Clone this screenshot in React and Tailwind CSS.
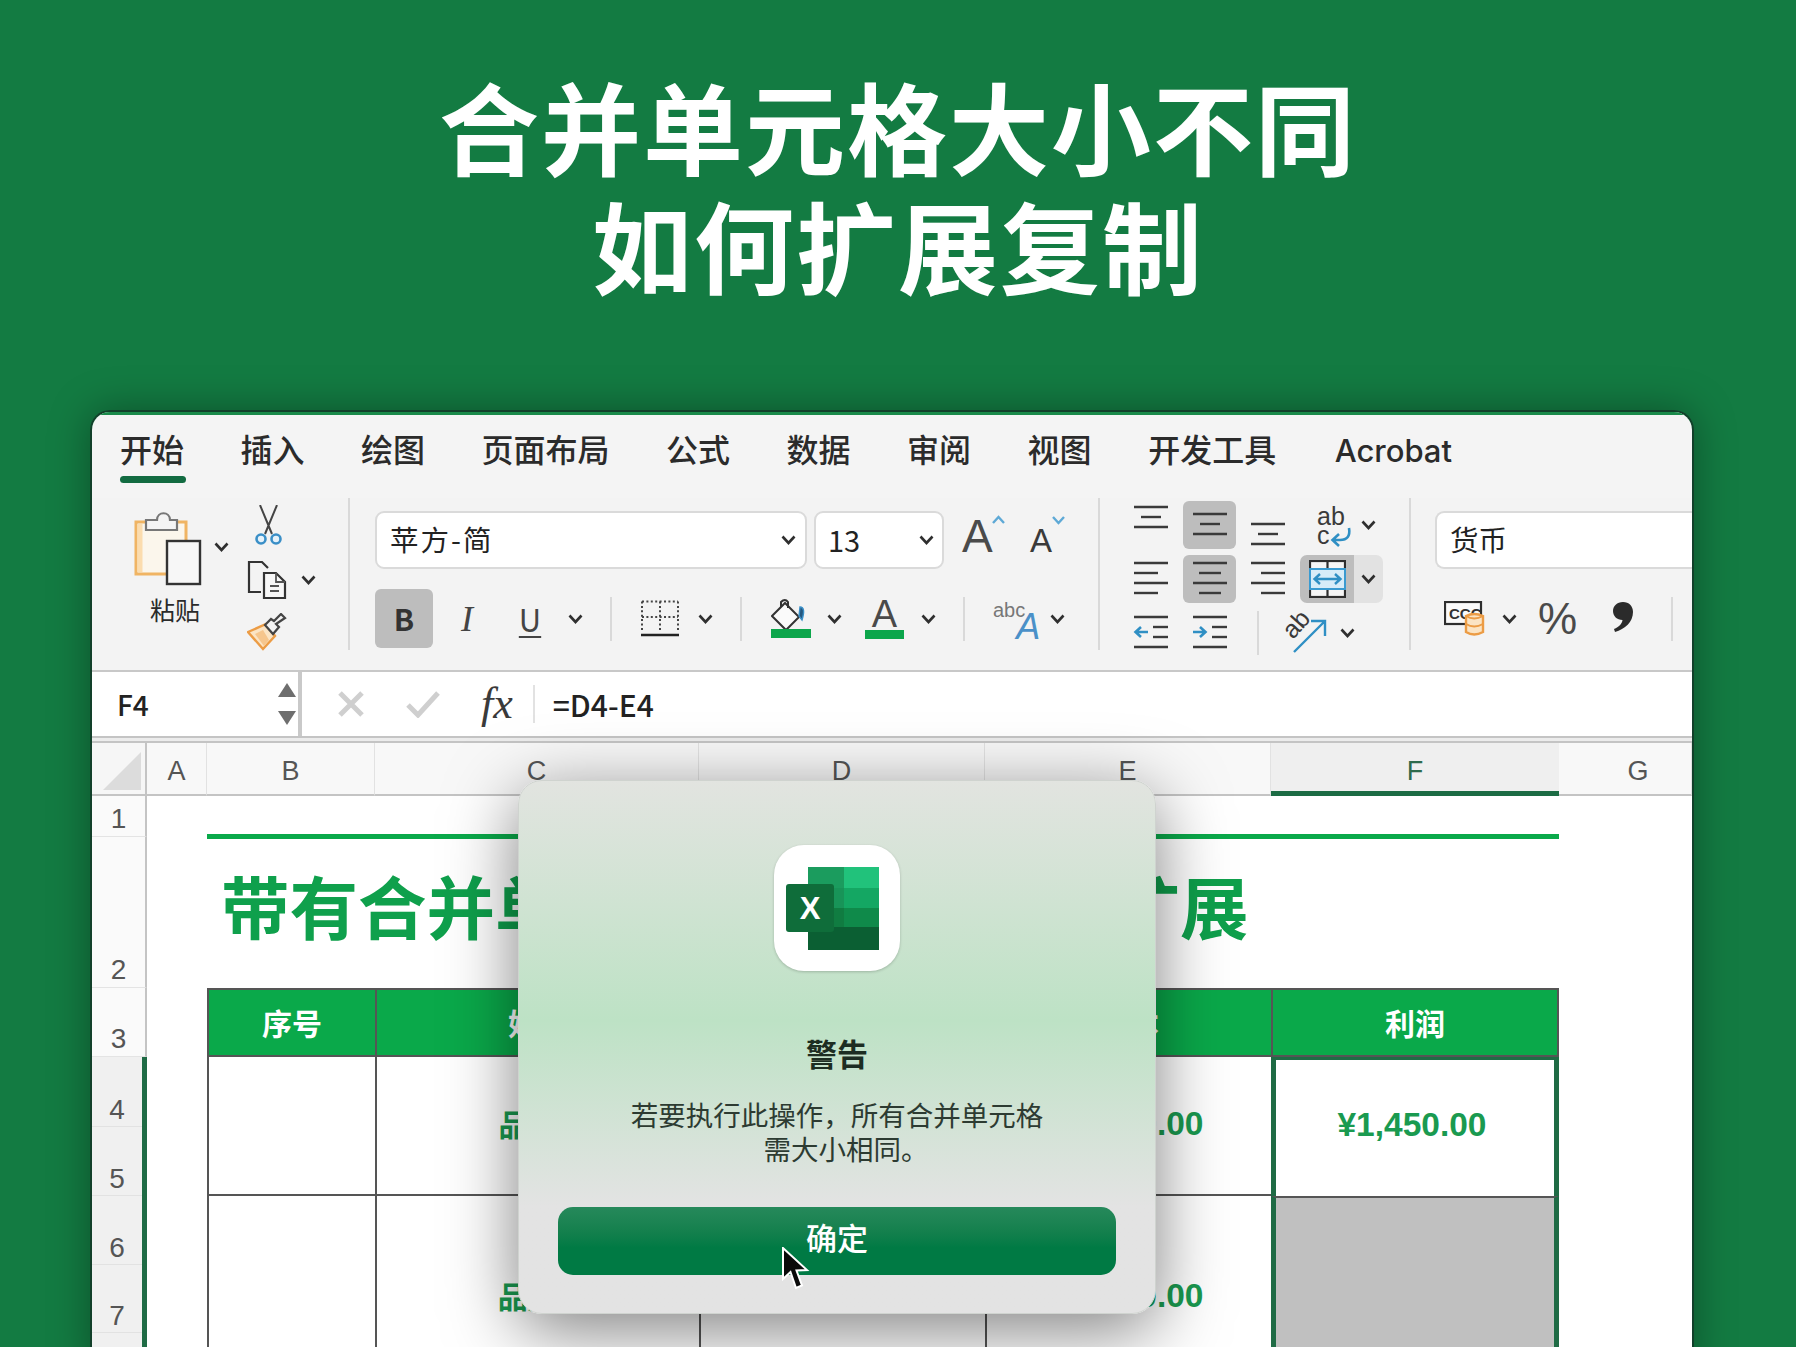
const tabs = ["开始", "插入", "绘图", "页面布局", "公式", "数据", "审阅", "视图", "开发工具", "Acrobat"];

const columns = [
  { label: "A", cls: "w-[60px]" },
  { label: "B", cls: "w-[168px]" },
  { label: "C", cls: "w-[324px]" },
  { label: "D", cls: "w-[286px]" },
  { label: "E", cls: "w-[286px]" },
  { label: "F", cls: "w-[288px]", active: true },
  { label: "G", cls: "w-[133px] pl-[26px]" },
];

// row number, row placement, selected
const rows = [
  ["1", "row-start-2", false],
  ["2", "row-start-3", false],
  ["3", "row-start-4", false],
  ["4", "row-start-5", true],
  ["5", "row-start-6", true],
  ["6", "row-start-7", true],
  ["7", "row-start-8", true],
  ["", "row-start-9", true],
];

const headers = [
  ["序号", "col-start-3"],
  ["姓名", "col-start-4"],
  ["销售额", "col-start-5"],
  ["成本", "col-start-6"],
];

function Chevron({ className = "" }) {
  return (
    <svg width="15" height="10" viewBox="0 0 15 10" className={className}>
      <path d="M1.5 1.5 L7.5 8 L13.5 1.5" fill="none" stroke="#2f2f2f" strokeWidth="2.6" />
    </svg>
  );
}

function ChevronBox({ w }) {
  return (
    <div className={`flex justify-center ${w}`}>
      <Chevron />
    </div>
  );
}

function Sep({ h = "h-[44px]", className = "" }) {
  return <div className={`w-[2px] shrink-0 bg-[#d9d9d9] ${h} ${className}`} />;
}

// horizontal text-alignment glyph, lines are [x1, x2, y]
function Lines({ lines, arrow }) {
  return (
    <svg width="36" height="48" viewBox="0 0 36 48">
      {lines.map(([a, b, y], i) => (
        <line key={i} x1={a} x2={b} y1={y} y2={y} stroke="#3a3a3a" strokeWidth="2.4" />
      ))}
      {arrow === "left" && (
        <path d="M15 23 H3 M8 18 L2.5 23 L8 28" fill="none" stroke="#2f8fc4" strokeWidth="2.6" />
      )}
      {arrow === "right" && (
        <path d="M1 23 H13 M8 18 L13.5 23 L8 28" fill="none" stroke="#2f8fc4" strokeWidth="2.6" />
      )}
    </svg>
  );
}

function PasteIcon() {
  return (
    <svg width="68" height="74" viewBox="0 0 68 74">
      <path d="M2 10 H52 V62 H2 Z" fill="#fbf6ec" stroke="#f0b463" strokeWidth="3" />
      <path d="M6 12 V60" stroke="#fbdcae" strokeWidth="5" />
      <path d="M12 18 V8 H23 C23 -1 36 -1 36 8 H43 V18 Z" fill="#f4f4f4" stroke="#777" strokeWidth="2.2" />
      <rect x="33" y="29" width="33" height="43" fill="#f7f7f7" stroke="#333" strokeWidth="2.4" />
    </svg>
  );
}

function ScissorsIcon() {
  return (
    <svg width="27" height="42" viewBox="0 0 27 42">
      <path d="M5 0 L17 29 M22 0 L10 29" stroke="#444" strokeWidth="2" fill="none" />
      <circle cx="6" cy="34" r="4.5" fill="#e6f2fa" stroke="#3a8fc7" strokeWidth="2.6" />
      <circle cx="21" cy="34" r="4.5" fill="#e6f2fa" stroke="#3a8fc7" strokeWidth="2.6" />
    </svg>
  );
}

function CopyIcon() {
  return (
    <svg width="40" height="40" viewBox="0 0 40 40">
      <path d="M14 32 H2 V2 H15 L21 8" fill="none" stroke="#333" strokeWidth="2.2" />
      <path d="M17 13 H29 L38 22 V38 H17 Z" fill="#f7f7f7" stroke="#333" strokeWidth="2.2" />
      <path d="M29 13 V22 H38 M23 26 H32 M23 31 H32" fill="none" stroke="#555" strokeWidth="1.8" />
    </svg>
  );
}

function BrushIcon() {
  return (
    <svg width="40" height="38" viewBox="0 0 40 38">
      <path d="M1 19 L19 11 L28 23 L16 36 Z" fill="#fbe4c4" stroke="#ec9c45" strokeWidth="2.4" />
      <path d="M8 21 L17 33 L22 27 L16 17 Z" fill="#f6c68d" />
      <path d="M18 12 L26 21 L32 14 L29 11 L38 5 L34 1 L27 8 L24 6 Z" fill="#f3f3f3" stroke="#444" strokeWidth="2.2" />
    </svg>
  );
}

function BorderIcon() {
  return (
    <svg width="38" height="37" viewBox="0 0 38 37">
      <path
        d="M1 1.5 H37 M1 1.5 V32 M37 1.5 V32 M19 1.5 V32 M1 17 H37"
        fill="none"
        stroke="#444"
        strokeWidth="2"
        strokeDasharray="2 2.4"
      />
      <path d="M0 35 H38" stroke="#222" strokeWidth="2.6" />
    </svg>
  );
}

function BucketIcon() {
  return (
    <svg width="40" height="40" viewBox="0 0 40 40">
      <path d="M1 17 L14 4 L28 18 L15 31 Z" fill="#fafafa" stroke="#333" strokeWidth="2" />
      <path d="M10 8 V3 Q14 -1 17 3 V9" fill="none" stroke="#333" strokeWidth="2" />
      <path d="M29 8 Q35 8 31 21 L28 17 Z" fill="#24577f" stroke="#3a8fc7" strokeWidth="1.4" />
      <rect x="0" y="30" width="40" height="9" fill="#0ca64b" />
    </svg>
  );
}

function MergeIcon() {
  return (
    <svg width="37" height="38" viewBox="0 0 37 38">
      <rect x="1" y="1" width="35" height="36" fill="#f5f5f5" stroke="#2e2e2e" strokeWidth="2.2" />
      <path d="M18.5 1 V11 M18.5 27 V37" stroke="#2e2e2e" strokeWidth="2.2" />
      <rect x="1" y="9" width="35" height="20" fill="#d7ecf8" stroke="#3a9ad0" strokeWidth="2" />
      <path d="M6 19 H31 M11 14 L5.5 19 L11 24 M26 14 L31.5 19 L26 24" fill="none" stroke="#2f8fc4" strokeWidth="2.4" />
    </svg>
  );
}

function WrapIcon() {
  return (
    <svg width="38" height="48" viewBox="0 0 38 48">
      <text x="1" y="24" fontSize="25" fill="#3a3a3a" fontFamily="Liberation Sans, sans-serif">ab</text>
      <text x="1" y="43" fontSize="25" fill="#3a3a3a" fontFamily="Liberation Sans, sans-serif">c</text>
      <path d="M33 27 Q35 39 24 39 H17 M23 33 L16.5 39 L23 45" fill="none" stroke="#2f8fc4" strokeWidth="2.6" />
    </svg>
  );
}

function RotateIcon() {
  return (
    <svg width="42" height="46" viewBox="0 0 42 46">
      <text
        x="8"
        y="30"
        fontSize="25"
        fill="#3a3a3a"
        fontFamily="Liberation Sans, sans-serif"
        transform="rotate(-48 8 30)"
      >
        ab
      </text>
      <path d="M9 42 L39 12 M26 11 H40 V26" fill="none" stroke="#2f8fc4" strokeWidth="2.4" />
    </svg>
  );
}

function CurrencyIcon() {
  return (
    <svg width="42" height="36" viewBox="0 0 42 36">
      <rect x="1" y="1" width="36" height="22" fill="#fafafa" stroke="#2e2e2e" strokeWidth="2.2" />
      <text x="5" y="18" fontSize="15" fontWeight="700" fill="#333" fontFamily="Liberation Sans, sans-serif">CCC</text>
      <path d="M22 15 Q30 11 39 15 V31 Q30 36 22 31 Z" fill="#fbe4c4" stroke="#ec9c45" strokeWidth="2.4" />
      <path d="M22 15 Q30 20 39 15 M22 23 Q30 28 39 23" fill="none" stroke="#ec9c45" strokeWidth="2" />
    </svg>
  );
}

function CommaIcon() {
  return (
    <svg width="20" height="30" viewBox="0 0 20 30">
      <path d="M10 0 C16 0 20 4 20 10 C20 20 12 27 2 30 L1 27 C6 25 9 22 9.5 18 C4 18 0 14 0 9 C0 4 4 0 10 0 Z" fill="#2b2b2b" />
    </svg>
  );
}

function ExcelLogo() {
  return (
    <svg width="93" height="83" viewBox="0 0 93 83">
      <rect x="22" y="0" width="36" height="21" fill="#1b9c5e" />
      <rect x="58" y="0" width="35" height="21" fill="#21c27b" />
      <rect x="22" y="21" width="36" height="20" fill="#189458" />
      <rect x="58" y="21" width="35" height="20" fill="#14a763" />
      <rect x="22" y="41" width="36" height="19" fill="#107c41" />
      <rect x="58" y="41" width="35" height="19" fill="#0f8a4a" />
      <rect x="22" y="60" width="71" height="23" fill="#0b5f33" />
      <rect x="0" y="17" width="48" height="48" rx="3" fill="#0f6d3a" />
      <text x="24" y="52" fontSize="31" fontWeight="700" fill="#ffffff" textAnchor="middle" fontFamily="Liberation Sans, sans-serif">
        X
      </text>
    </svg>
  );
}

function Cursor() {
  return (
    <svg width="32" height="46" viewBox="0 0 32 46">
      <path
        d="M2 1 L2 32 L9.5 25 L15 41 L21 38.5 L15.5 23.5 L26 23 Z"
        fill="#0a0a0a"
        stroke="#ffffff"
        strokeWidth="2"
      />
    </svg>
  );
}

function Ribbon() {
  return (
    <div className="flex h-[174px] border-b-2 border-[#c8c8c8] bg-[#f3f3f3]">
      {/* clipboard */}
      <div className="flex h-[152px] w-[256px] shrink-0 pl-[42px] pt-[14px]">
        <div className="w-[113px]">
          <div className="flex">
            <PasteIcon />
            <Chevron className="ml-[12px] mt-[30px]" />
          </div>
          <div className="ml-[16px] mt-[6px] text-[25px] leading-[34px] text-[#2b2b2b]">粘贴</div>
        </div>
        <div className="-mt-[7px] flex flex-col">
          <div className="ml-[8px]">
            <ScissorsIcon />
          </div>
          <div className="mt-[13px] flex items-center">
            <CopyIcon />
            <Chevron className="ml-[14px]" />
          </div>
          <div className="mt-[13px]">
            <BrushIcon />
          </div>
        </div>
      </div>
      <Sep h="h-[152px]" />

      {/* font */}
      <div className="w-[748px] shrink-0 pl-[25px] pt-[13px]">
        <div className="flex items-center">
          <div className="flex h-[58px] w-[432px] items-center justify-between rounded-[9px] border-2 border-[#dadada] bg-white pb-[1px] pl-[13px] pr-[9px] text-[28.5px] text-[#222]">
            <span className="tracking-[2px]">苹方-简</span>
            <Chevron />
          </div>
          <div className="ml-[7px] flex h-[58px] w-[130px] items-center justify-between rounded-[9px] border-2 border-[#dadada] bg-white pb-[1px] pl-[12px] pr-[8px] text-[29px] text-[#222]">
            <span>13</span>
            <Chevron />
          </div>
          <div className="ml-[18px] flex w-[68px] items-start font-['Liberation_Sans',sans-serif]">
            <span className="-mt-[8px] text-[46px] leading-[52px] text-[#4a4a4a]">A</span>
            <span className="-ml-[1px] -mt-[3px] text-[#5ea9d6]">
              <svg width="13" height="9" viewBox="0 0 13 9">
                <path d="M1 8 L6.5 2 L12 8" fill="none" stroke="currentColor" strokeWidth="2.4" />
              </svg>
            </span>
          </div>
          <div className="flex items-start font-['Liberation_Sans',sans-serif]">
            <span className="mt-[2px] text-[33px] leading-[40px] text-[#3a3a3a]">A</span>
            <span className="-mt-[3px] text-[#5ea9d6]">
              <svg width="13" height="9" viewBox="0 0 13 9">
                <path d="M1 1 L6.5 7 L12 1" fill="none" stroke="currentColor" strokeWidth="2.4" />
              </svg>
            </span>
          </div>
        </div>

        <div className="mt-[20px] flex h-[59px] items-center">
          <div className="flex h-[59px] w-[58px] items-center justify-center rounded-[6px] bg-[#bdbdbd] text-[30px] font-bold text-[#333]">
            B
          </div>
          <div className="flex w-[68px] justify-center font-['Liberation_Serif',serif] text-[36px] italic leading-[40px] text-[#444]">I</div>
          <div className="flex w-[58px] justify-center text-[31px] leading-[38px] text-[#444] underline decoration-2 underline-offset-[4px]">U</div>
          <ChevronBox w="w-[32px]" />
          <Sep className="ml-[19px]" />
          <div className="ml-[29px] flex w-[38px]">
            <BorderIcon />
          </div>
          <ChevronBox w="w-[53px]" />
          <Sep className="ml-[8px]" />
          <div className="ml-[29px] w-[40px]">
            <BucketIcon />
          </div>
          <ChevronBox w="w-[46px]" />
          <div className="ml-[8px] flex w-[39px] flex-col items-center">
            <span className="font-['Liberation_Sans',sans-serif] text-[38px] leading-[30px] text-[#4a4a4a]">A</span>
            <div className="mt-[1px] h-[9px] w-[39px] bg-[#0ca64b]" />
          </div>
          <ChevronBox w="w-[48px]" />
          <Sep className="ml-[11px]" />
          <div className="ml-[28px] flex w-[44px] items-end">
            <span className="mb-[18px] font-['Liberation_Sans',sans-serif] text-[20px] leading-[22px] text-[#777]">abc</span>
            <span className="-mb-[6px] -ml-[9px] font-['Liberation_Sans',sans-serif] text-[36px] italic leading-[36px] text-[#4a90c8]">A</span>
          </div>
          <ChevronBox w="w-[40px]" />
        </div>
      </div>
      <Sep h="h-[152px]" />

      {/* alignment */}
      <div className="flex w-[309px] shrink-0 flex-col gap-[6px] pl-[22px] pt-[3px]">
        <div className="flex h-[48px] items-center">
          <div className="flex w-[58px] justify-center">
            <Lines lines={[[1, 35, 6], [8, 28, 16], [1, 35, 26]]} />
          </div>
          <div className="flex w-[59px] justify-center">
            <div className="flex h-[48px] w-[53px] justify-center rounded-[6px] bg-[#bdbdbd]">
              <Lines lines={[[1, 35, 13], [8, 28, 23], [1, 35, 33]]} />
            </div>
          </div>
          <div className="flex w-[58px] justify-center">
            <Lines lines={[[1, 35, 23], [8, 28, 33], [1, 35, 43]]} />
          </div>
          <div className="ml-[3px] flex w-[54px] justify-end">
            <WrapIcon />
          </div>
          <ChevronBox w="w-[29px]" />
        </div>

        <div className="flex h-[48px] items-center">
          <div className="flex w-[58px] justify-center">
            <Lines lines={[[1, 35, 8], [1, 25, 18], [1, 35, 28], [1, 25, 38]]} />
          </div>
          <div className="flex w-[59px] justify-center">
            <div className="flex h-[48px] w-[53px] justify-center rounded-[6px] bg-[#bdbdbd]">
              <Lines lines={[[1, 35, 8], [7, 29, 18], [1, 35, 28], [7, 29, 38]]} />
            </div>
          </div>
          <div className="flex w-[58px] justify-center">
            <Lines lines={[[1, 35, 8], [11, 35, 18], [1, 35, 28], [11, 35, 38]]} />
          </div>
          <div className="ml-[3px] flex h-[48px] items-center overflow-hidden rounded-[7px]">
            <div className="flex h-[48px] w-[54px] items-center justify-center bg-[#bdbdbd]">
              <MergeIcon />
            </div>
            <div className="flex h-[48px] w-[29px] items-center justify-center bg-[#e2e2e2]">
              <Chevron />
            </div>
          </div>
        </div>

        <div className="flex h-[48px] items-center">
          <div className="flex w-[58px] justify-center">
            <Lines arrow="left" lines={[[1, 35, 8], [20, 35, 18], [20, 35, 28], [1, 35, 38]]} />
          </div>
          <div className="flex w-[59px] justify-center">
            <Lines arrow="right" lines={[[1, 35, 8], [20, 35, 18], [20, 35, 28], [1, 35, 38]]} />
          </div>
          <Sep className="ml-[18px]" />
          <div className="ml-[26px] w-[42px]">
            <RotateIcon />
          </div>
          <ChevronBox w="w-[40px]" />
        </div>
      </div>
      <Sep h="h-[152px]" />

      {/* number */}
      <div className="w-[281px] shrink-0 pl-[24px] pt-[13px]">
        <div className="-mr-[10px] flex h-[58px] items-center rounded-l-[9px] border-2 border-r-0 border-[#dadada] bg-white pb-[1px] pl-[13px] text-[28.5px] text-[#222]">
          货币
        </div>
        <div className="mt-[20px] flex h-[59px] items-center">
          <div className="ml-[9px] w-[42px]">
            <CurrencyIcon />
          </div>
          <ChevronBox w="w-[46px]" />
          <span className="ml-[6px] w-[40px] font-['Liberation_Sans',sans-serif] text-[44px] leading-[50px] text-[#4a4a4a]">%</span>
          <div className="-mt-[3px] ml-[35px] w-[20px]">
            <CommaIcon />
          </div>
          <Sep className="ml-[38px]" />
        </div>
      </div>
    </div>
  );
}

function FormulaBar() {
  return (
    <div className="flex h-[64px] bg-white">
      <div className="flex w-[210px] shrink-0 items-center justify-between border-r-4 border-[#c9c9c9] pl-[25px] pr-[2px] text-[28px] font-medium text-[#222]">
        <span>F4</span>
        <div className="flex flex-col gap-[14px]">
          <svg width="18" height="14" viewBox="0 0 18 14">
            <path d="M9 0 L18 14 H0 Z" fill="#6e6e6e" />
          </svg>
          <svg width="18" height="14" viewBox="0 0 18 14">
            <path d="M9 14 L18 0 H0 Z" fill="#6e6e6e" />
          </svg>
        </div>
      </div>
      <div className="flex flex-1 items-center">
        <svg width="28" height="28" viewBox="0 0 28 28" className="ml-[35px]">
          <path d="M3 3 L25 25 M25 3 L3 25" stroke="#cfcfcf" strokeWidth="5" />
        </svg>
        <svg width="34" height="28" viewBox="0 0 34 28" className="ml-[41px]">
          <path d="M2 15 L12 25 L32 3" fill="none" stroke="#cfcfcf" strokeWidth="5" />
        </svg>
        <span className="ml-[41px] font-['Liberation_Serif',serif] text-[44px] italic text-[#3a3a3a]">fx</span>
        <div className="ml-[20px] h-[38px] w-[2px] bg-[#e2e2e2]" />
        <span className="ml-[18px] text-[30px] font-medium text-[#222]">=D4-E4</span>
      </div>
    </div>
  );
}

function Sheet() {
  return (
    <div className="grid grid-cols-[55px_60px_168px_324px_286px_286px_288px_133px] grid-rows-[53px_41px_151px_69px_70px_69px_69px_68px_69px] bg-white font-['Liberation_Sans',sans-serif]">
      {/* corner + column headers */}
      <div className="flex items-end justify-end border-b-2 border-r-2 border-[#c4c4c4] bg-[#f6f6f6] pb-[4px] pr-[4px]">
        <svg width="38" height="38" viewBox="0 0 38 38">
          <path d="M38 0 V38 H0 Z" fill="#dcdcdc" />
        </svg>
      </div>
      {columns.map((col) => (
        <div
          key={col.label}
          className={`flex items-center justify-center text-[27px] ${col.cls} ${
            col.active
              ? "border-b-[5px] border-[#1c6b44] bg-[#efefef] pt-[8px] text-[#2f6b4d]"
              : "border-b-2 border-r border-[#c4c4c4] border-r-[#e2e2e2] bg-[#f8f8f8] pt-[5px] text-[#555]"
          }`}
        >
          {col.label}
        </div>
      ))}

      {/* row numbers */}
      {rows.map(([num, rowCls, selected]) => (
        <div
          key={rowCls}
          className={`col-start-1 flex items-end justify-center text-[28px] leading-[34px] text-[#555] ${rowCls} ${
            selected
              ? "border-r-[5px] border-[#1f6b45] bg-[#f0f0f0] shadow-[inset_0_-1px_0_#e2e2e2]"
              : "border-b border-r-2 border-b-[#e4e4e4] border-r-[#c4c4c4] bg-[#fafafa]"
          }`}
        >
          {num}
        </div>
      ))}

      {/* sheet title */}
      <div className="col-span-5 col-start-3 row-start-2 -mb-[2px] h-[5px] self-end bg-[#0aa94a]" />
      <div className="col-span-5 col-start-3 row-start-3 flex items-center whitespace-nowrap pb-[14px] pl-[14px] font-['Noto_Sans_CJK_SC',sans-serif] text-[68.5px] font-bold text-[#0fa04c]">
        带有合并单元格的数据公式的扩展
      </div>

      {/* table head */}
      {headers.map(([text, colCls]) => (
        <div
          key={text}
          className={`row-start-4 flex items-center justify-center border-2 border-r-0 border-[#555] bg-[#0aa94a] font-['Noto_Sans_CJK_SC',sans-serif] text-[30px] font-bold text-white ${colCls}`}
        >
          {text}
        </div>
      ))}
      <div className="col-start-7 row-start-4 flex items-center justify-center border-2 border-[#555] bg-[#0aa94a] font-['Noto_Sans_CJK_SC',sans-serif] text-[30px] font-bold text-white">
        利润
      </div>

      {/* first merged row */}
      <div className="col-start-3 row-span-2 row-start-5 border-b-2 border-l-2 border-[#555]" />
      <div className="col-start-4 row-span-2 row-start-5 flex items-center justify-center border-b-2 border-l-2 border-[#555] pb-[4px] font-['Noto_Sans_CJK_SC',sans-serif] text-[30px] font-bold text-[#1a9a50]">
        品牌A
      </div>
      <div className="col-start-5 row-span-2 row-start-5 flex items-center justify-center border-b-2 border-l-2 border-[#555] pb-[2px] text-[33.5px] font-bold text-[#1a9a50]">
        ¥5,000.00
      </div>
      <div className="col-start-6 row-span-2 row-start-5 flex items-center justify-center border-b-2 border-l-2 border-[#555] pb-[2px] text-[33.5px] font-bold text-[#1a9a50]">
        ¥3,550.00
      </div>
      <div className="col-start-7 row-span-2 row-start-5 flex items-center justify-center border-x-[5px] border-t-[3px] border-x-[#1f6b45] border-t-[#1f6b45] pb-[6px] pr-[6px] text-[33.5px] font-bold text-[#1a9a50]">
        ¥1,450.00
      </div>

      {/* second merged row */}
      <div className="col-start-3 row-span-3 row-start-7 border-l-2 border-[#555]" />
      <div className="col-start-4 row-span-3 row-start-7 flex items-center justify-center border-l-2 border-[#555] pb-[8px] font-['Noto_Sans_CJK_SC',sans-serif] text-[30px] font-bold text-[#1a9a50]">
        品牌B
      </div>
      <div className="col-start-5 row-span-3 row-start-7 flex items-center justify-center border-l-2 border-[#555] pb-[6px] text-[33.5px] font-bold text-[#1a9a50]">
        ¥4,200.00
      </div>
      <div className="col-start-6 row-span-3 row-start-7 flex items-center justify-center border-l-2 border-[#555] pb-[6px] text-[33.5px] font-bold text-[#1a9a50]">
        ¥2,800.00
      </div>
      <div className="col-start-7 row-span-3 row-start-7 border-x-[5px] border-t-2 border-x-[#1f6b45] border-t-[#555] bg-[#c0c0c0]" />
    </div>
  );
}

function AlertDialog() {
  return (
    <div className="absolute left-[518px] top-[780px] flex h-[534px] w-[638px] flex-col items-center rounded-[24px] border border-[#cfd3cf] bg-gradient-to-b from-[#e2e4e0] via-[#bde2c5] via-45% to-[#e3e3e3] to-80% shadow-[0_16px_70px_rgba(0,0,0,0.5)]">
      <div className="mt-[64px] flex h-[126px] w-[126px] items-center justify-center rounded-[30px] bg-white pr-[10px] shadow-[0_1px_3px_rgba(0,0,0,0.2)]">
        <ExcelLogo />
      </div>
      <div className="mt-[62px] text-[31px] font-bold leading-[40px] text-[#1d2d22]">警告</div>
      <div className="mt-[24px] text-center text-[27.5px] leading-[34px] text-[#2d3b32]">
        <p>若要执行此操作，所有合并单元格</p>
        <p className="pl-[18px]">需大小相同。</p>
      </div>
      <button className="mt-[42px] flex h-[68px] w-[558px] items-center justify-center rounded-[15px] bg-gradient-to-b from-[#26895b] to-[#007a44] to-60% pb-[8px] text-[31px] font-medium text-white">
        确定
      </button>
    </div>
  );
}

export default function App() {
  return (
    <div className="relative h-[1347px] w-[1796px] overflow-hidden bg-[#137b42] font-['Noto_Sans_CJK_SC',sans-serif]">
      <div className="pt-[65px] text-center text-[100px] font-semibold leading-[119px] tracking-[2px] text-white">
        <p>合并单元格大小不同</p>
        <p>如何扩展复制</p>
      </div>

      <div className="ml-[90px] mt-[107px] h-[960px] w-[1604px] overflow-hidden rounded-t-[20px] border-2 border-b-0 border-[#12402a] shadow-[0_0_40px_rgba(0,0,0,0.35)]">
        <div className="border-t-[3px] border-[#1a8a4a] bg-[#f4f4f4]">
          {/* tabs */}
          <div className="flex h-[83px] gap-[56.5px] pl-[28px] font-medium text-[#2b2b2b]">
            {tabs.map((tab, i) => (
              <div key={tab} className="relative pt-[11px] text-[32px] leading-[44px]">
                {tab === "Acrobat" ? <span className="ml-[2px] font-['Inter',sans-serif] text-[31px]">{tab}</span> : tab}
                {i === 0 && <div className="absolute bottom-[15px] left-0 h-[7px] w-[66px] rounded-full bg-[#126b41]" />}
              </div>
            ))}
          </div>
          <Ribbon />
          <FormulaBar />
          <div className="h-[7px] border-y-2 border-[#c4c4c4] bg-[#ececec]" />
          <Sheet />
        </div>
      </div>

      <AlertDialog />
      <div className="absolute left-[781px] top-[1247px]">
        <Cursor />
      </div>
    </div>
  );
}
